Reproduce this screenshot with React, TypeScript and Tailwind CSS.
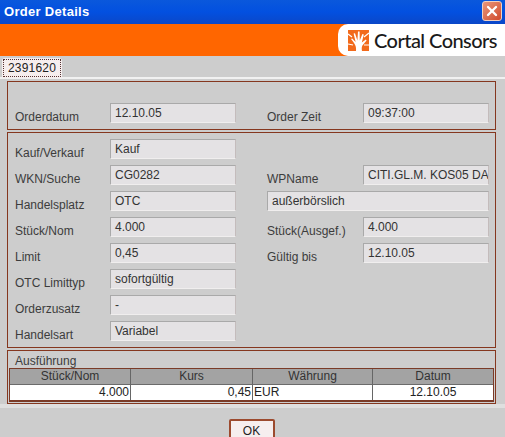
import React from 'react';
import { X } from 'lucide-react';

function Field({ value, className = '' }: { value: string; className?: string }) {
  return (
    <div className={`h-[20px] pl-[4px] pt-[2px] overflow-hidden whitespace-nowrap text-[12px] leading-[14px] text-[#333] bg-[#e4e2e4] border border-[#a9a9a9] border-r-[#c4bcbc] border-b-[#f0eeee] ${className}`}>
      {value}
    </div>
  );
}

function Label({ text }: { text: string }) {
  return <div className="h-[20px] pt-[7px] text-[12px] leading-[15px] text-[#3c3c3c] whitespace-nowrap">{text}</div>;
}

function Logo() {
  return (
    <svg width="21" height="21" viewBox="0 0 21 21" className="shrink-0">
      <rect width="21" height="21" fill="#f26a1b" />
      <path d="M8 21 C8.5 16 7 14 3 9 L4.2 8.4 L7.6 12 L5.6 3.5 L7 3.2 L9.4 10.5 L10 1.5 L11.6 1.5 L11.8 10.5 L14.4 4 L15.8 4.6 L13.8 12.5 L17.8 9.4 L18.6 10.4 L14.4 15.6 C13.6 17 13.6 19 14 21 Z" fill="#ffffff" />
      <path d="M0 4 L4 7 M21 3 L16 7 M0 14 L5 15 M21 15 L16 15" stroke="#ffffff" strokeWidth="1.2" />
    </svg>
  );
}

const headers = ['Stück/Nom', 'Kurs', 'Währung', 'Datum'];

export default function App() {
  return (
    <div className="w-[505px] h-[437px] overflow-hidden bg-[#cdcdcd] flex flex-col font-['Liberation_Sans',Arial,sans-serif]">
      {/* Title bar */}
      <div className="h-[24px] shrink-0 flex items-center justify-between pl-[4px] pr-[3px] bg-gradient-to-b from-[#0a58dc] via-[#0350e0] to-[#0a47c8]">
        <span className="text-[13px] font-bold text-white tracking-[0.3px]">Order Details</span>
        <div className="w-[20px] h-[20px] -mt-[2px] flex items-center justify-center rounded-[3px] border border-[#f0d0c0] bg-gradient-to-br from-[#e8967a] to-[#d0482a]">
          <X size={16} strokeWidth={3.5} color="#ffffff" />
        </div>
      </div>

      {/* Banner */}
      <div className="h-[32px] shrink-0 flex justify-end bg-[#ff6600]">
        <div className="w-[167px] flex items-center pl-[10px] gap-[5px] bg-white rounded-l-[10px]">
          <Logo />
          <span className="font-['Lato',sans-serif] text-[20px] font-medium tracking-[-0.55px] text-[#1a1a1a] whitespace-nowrap">Cortal Consors</span>
        </div>
      </div>

      {/* Tab strip */}
      <div className="h-[23px] shrink-0 pt-[2px] pl-[2px] border-b-2 border-[#f1f1f1]">
        <div className="w-[60px] h-[20px] p-[1px] bg-[#f6eeee] rounded-t-[3px]">
          <div className="h-[18px] border border-dotted border-[#553333] text-[12px] leading-[16px] tracking-[0.2px] text-center text-[#222]">2391620</div>
        </div>
      </div>

      {/* Panels */}
      <div className="h-[329px] shrink-0 pt-[2px] pl-[7px] pr-[9px] bg-[#cdcdcd] border-b-[4px] border-[#dfdfdf] flex flex-col gap-[2px]">
        <div className="h-[49px] shrink-0 border border-[#85371f] pt-[21px] pl-[7px] grid grid-cols-[95px_126px_31px_96px_126px]">
          <Label text="Orderdatum" />
          <Field value="12.10.05" />
          <div />
          <Label text="Order Zeit" />
          <Field value="09:37:00" />
        </div>

        <div className="h-[216px] shrink-0 border border-[#85371f] pt-[6px] pl-[7px] grid grid-cols-[95px_126px_31px_96px_126px] auto-rows-[20px] gap-y-[6px] content-start">
          <Label text="Kauf/Verkauf" />
          <Field value="Kauf" />
          <div className="col-span-3" />

          <Label text="WKN/Suche" />
          <Field value="CG0282" />
          <div />
          <Label text="WPName" />
          <Field value="CITI.GL.M. KOS05 DAX" />

          <Label text="Handelsplatz" />
          <Field value="OTC" />
          <div />
          <Field value="außerbörslich" className="col-span-2" />

          <Label text="Stück/Nom" />
          <Field value="4.000" />
          <div />
          <Label text="Stück(Ausgef.)" />
          <Field value="4.000" />

          <Label text="Limit" />
          <Field value="0,45" />
          <div />
          <Label text="Gültig bis" />
          <Field value="12.10.05" />

          <Label text="OTC Limittyp" />
          <Field value="sofortgültig" />
          <div className="col-span-3" />

          <Label text="Orderzusatz" />
          <Field value="-" />
          <div className="col-span-3" />

          <Label text="Handelsart" />
          <Field value="Variabel" />
        </div>

        <div className="h-[54px] shrink-0 border border-[#85371f] px-[1px] flex flex-col">
          <div className="h-[17px] shrink-0 pl-[6px] pt-[3px] text-[12px] leading-[14px] text-[#3c3c3c]">Ausführung</div>
          <div className="h-[34px] shrink-0 border-x border-t border-b-2 border-[#7a3b28] grid grid-cols-[121px_122px_120px_1fr] grid-rows-[16px_15px]">
            {headers.map((h, i) => (
              <div key={h} className={`bg-[#a3a3a3] border-b border-[#6b6b6b] text-center text-[12px] leading-[15px] text-[#333] ${i < 3 ? 'border-r border-r-[#666]' : ''}`}>{h}</div>
            ))}
            <div className="bg-white border-r border-[#666] text-right text-[12px] leading-[15px] pr-[1px] text-[#222]">4.000</div>
            <div className="bg-white border-r border-[#666] text-right text-[12px] leading-[15px] pr-[1px] text-[#222]">0,45</div>
            <div className="bg-white border-r border-[#666] text-[12px] leading-[15px] pl-[1px] text-[#222]">EUR</div>
            <div className="bg-white text-center text-[12px] leading-[15px] text-[#222]">12.10.05</div>
          </div>
        </div>
      </div>

      {/* Footer */}
      <div className="flex-1 min-h-0 flex justify-center pt-[11px] pr-[2px]">
        <button className="w-[46px] h-[24px] shrink-0 bg-[#f6eeee] border-2 border-[#9c4a2e] rounded-[2px] text-[12px] leading-[18px] text-[#222]">OK</button>
      </div>
    </div>
  );
}
